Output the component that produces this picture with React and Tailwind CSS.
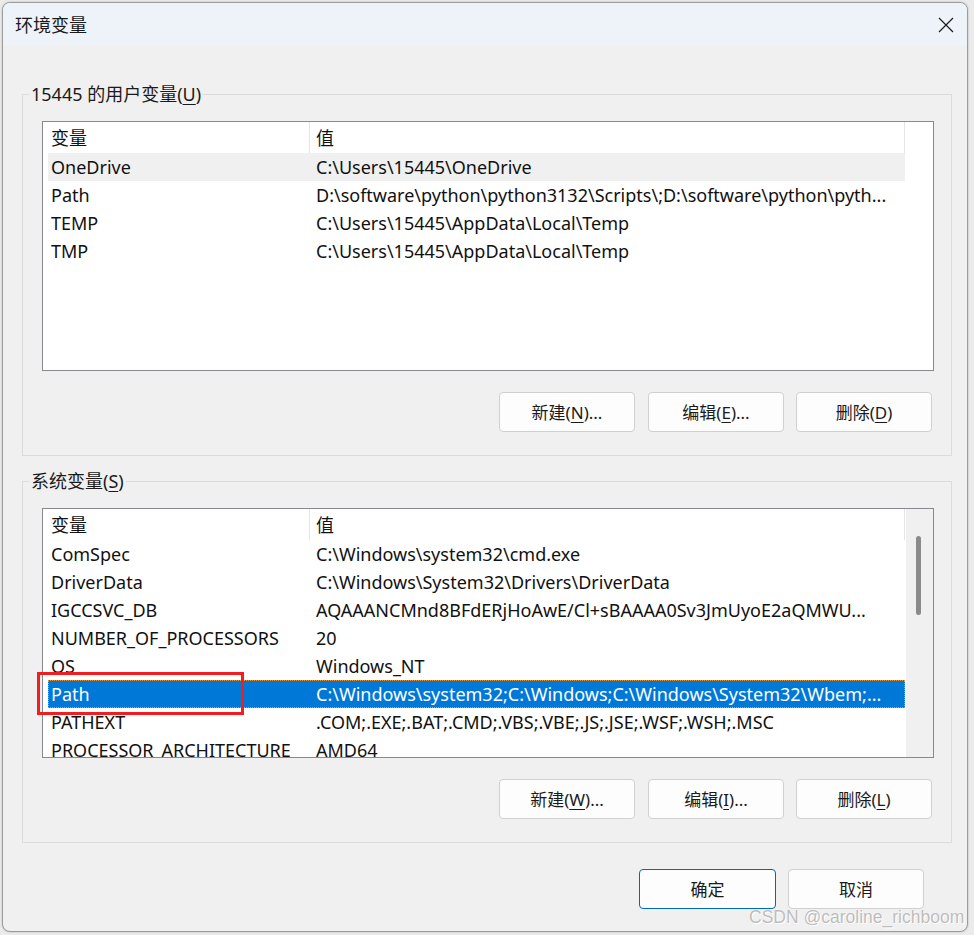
import React from "react";

const FONT = "font-['Noto_Sans','Noto_Sans_CJK_SC',sans-serif]";

function Header({ full }) {
  return (
    <div className="flex h-[31px] shrink-0 items-center bg-white">
      <div className="flex h-full w-[267px] shrink-0 items-center border-r border-[#e5e5e5] pl-[8px]">变量</div>
      <div className="flex h-full w-[595px] shrink-0 items-center border-r border-[#e5e5e5] pl-[6px]">值</div>
      {full ? <div className="h-full flex-1" /> : null}
    </div>
  );
}

function Row({ name, value, state }) {
  let cls = "border border-transparent";
  if (state === "sel") cls = "border border-dotted border-[#e8963c] bg-[#0078d7] text-white";
  if (state === "hover") cls = "border border-transparent bg-[#f0f0f0]";
  return (
    <div className={`ml-[5px] flex h-[28px] w-[857px] shrink-0 items-center pl-[2px] ${cls}`}>
      <div className="w-[265px] shrink-0 overflow-hidden whitespace-nowrap leading-[26px]">{name}</div>
      <div className="min-w-0 flex-1 overflow-hidden text-ellipsis whitespace-nowrap leading-[26px]">{value}</div>
    </div>
  );
}

function ListBox({ rows, scroll }) {
  return (
    <div className="flex h-[250px] w-[892px] overflow-hidden border border-[#868a8e] bg-white text-[18px] leading-none text-[#111]">
      <div className={scroll ? "flex w-[863px] shrink-0 flex-col" : "flex w-[890px] shrink-0 flex-col"}>
        <Header full={!scroll} />
        {rows.map((r) => (
          <Row key={r[0]} name={r[0]} value={r[1]} state={r[2]} />
        ))}
      </div>
      {scroll ? (
        <div className="h-full w-[27px] shrink-0 bg-[#f0f0f0] pt-[27px]">
          <div className="ml-[10px] h-[79px] w-[5px] rounded-full bg-[#8a8a8a]" />
        </div>
      ) : null}
    </div>
  );
}

function Btn({ children, primary, wide }) {
  const border = primary ? "border-[#0067c0]" : "border-[#d0d0d0]";
  const w = wide ? "w-[137px]" : "w-[136px]";
  return (
    <div
      className={`flex h-[40px] ${w} items-center justify-center rounded-[4px] border ${border} bg-[#fdfdfd] text-[17px] leading-none text-[#1a1a1a]`}
    >
      {children}
    </div>
  );
}

function U({ children }) {
  return <span className="underline underline-offset-[3px] decoration-1">{children}</span>;
}

function Group({ legend, rows, scroll, btns, className }) {
  return (
    <fieldset className={`ml-[19px] w-[930px] border border-[#dcdcdc] pb-[23px] pl-[19px] pt-[15px] ${className}`}>
      <legend className="-ml-[13px] px-[2px] text-[18px] leading-[24px] text-[#1a1a1a]">{legend}</legend>
      <ListBox rows={rows} scroll={scroll} />
      <div className="mt-[21px] flex w-[890px] justify-end">
        <Btn>{btns[0]}</Btn>
        <div className="w-[13px]" />
        <Btn>{btns[1]}</Btn>
        <div className="w-[12px]" />
        <Btn>{btns[2]}</Btn>
      </div>
    </fieldset>
  );
}

const userRows = [
  ["OneDrive", String.raw`C:\Users\15445\OneDrive`, "hover"],
  ["Path", String.raw`D:\software\python\python3132\Scripts\;D:\software\python\pyth...`],
  ["TEMP", String.raw`C:\Users\15445\AppData\Local\Temp`],
  ["TMP", String.raw`C:\Users\15445\AppData\Local\Temp`],
];

const sysRows = [
  ["ComSpec", String.raw`C:\Windows\system32\cmd.exe`],
  ["DriverData", String.raw`C:\Windows\System32\Drivers\DriverData`],
  ["IGCCSVC_DB", "AQAAANCMnd8BFdERjHoAwE/Cl+sBAAAA0Sv3JmUyoE2aQMWU..."],
  ["NUMBER_OF_PROCESSORS", "20"],
  ["OS", "Windows_NT"],
  ["Path", String.raw`C:\Windows\system32;C:\Windows;C:\Windows\System32\Wbem;...`, "sel"],
  ["PATHEXT", ".COM;.EXE;.BAT;.CMD;.VBS;.VBE;.JS;.JSE;.WSF;.WSH;.MSC"],
  ["PROCESSOR_ARCHITECTURE", "AMD64"],
];

export default function App() {
  return (
    <div className={`relative h-[935px] w-[974px] overflow-hidden bg-[#ebebeb] pl-[2px] pt-[2px] ${FONT}`}>
      <div className="flex h-[930px] w-[966px] flex-col overflow-hidden rounded-[8px] border border-[#9c9c9c] bg-[#f0f0f0] shadow-[0_0_2px_rgba(0,0,0,0.25)]">
        <div className="flex h-[43px] shrink-0 items-center justify-between bg-[#eef3f9] pl-[12px] pr-[13px]">
          <span className="text-[18px] leading-none text-[#1a1a1a]">环境变量</span>
          <svg width="16" height="16" viewBox="0 0 16 16" className="mt-[1px]">
            <path d="M1 1 L15 15 M15 1 L1 15" stroke="#1a1a1a" strokeWidth="1.2" fill="none" />
          </svg>
        </div>

        <Group
          className="mt-[36px]"
          legend={
            <>
              15445 的用户变量(<U>U</U>)
            </>
          }
          rows={userRows}
          btns={[
            <>新建(<U>N</U>)...</>,
            <>编辑(<U>E</U>)...</>,
            <>删除(<U>D</U>)</>,
          ]}
        />

        <Group
          className="mt-[13px]"
          legend={<>系统变量(<U>S</U>)</>}
          rows={sysRows}
          scroll
          btns={[
            <>新建(<U>W</U>)...</>,
            <>编辑(<U>I</U>)...</>,
            <>删除(<U>L</U>)</>,
          ]}
        />

        <div className="mt-[26px] flex justify-end pr-[43px]">
          <Btn primary wide>确定</Btn>
          <div className="w-[12px]" />
          <Btn>取消</Btn>
        </div>
      </div>

      <div className="pointer-events-none absolute left-[37px] top-[672px] h-[43px] w-[207px] border-[3px] border-[#f01e1e]" />

      <div className="pointer-events-none absolute left-[749px] top-[906px] whitespace-nowrap font-['Liberation_Sans',sans-serif] text-[17.5px] leading-[22px] text-[#bdbdbd] [text-shadow:0_0_1px_#ffffff,1px_1px_0_#ffffff]">
        CSDN @caroline_richboom
      </div>
    </div>
  );
}
